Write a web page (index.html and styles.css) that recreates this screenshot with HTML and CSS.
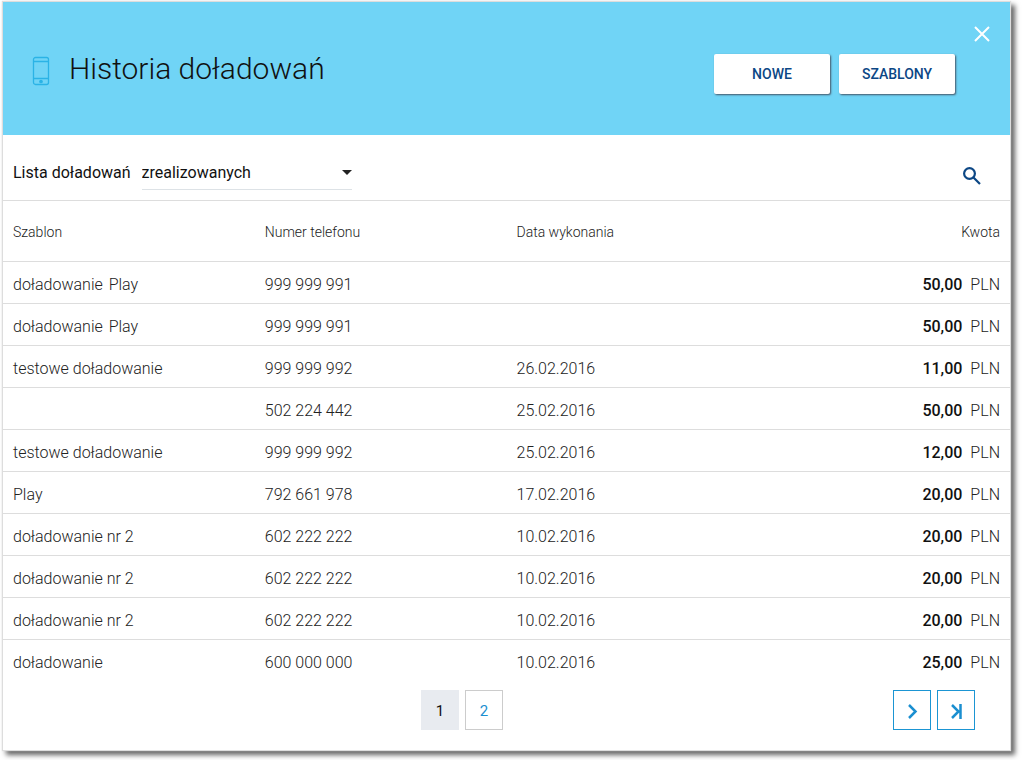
FILE: index.html
```html
<!DOCTYPE html>
<html lang="pl">
<head>
<meta charset="utf-8">
<meta name="viewport" content="width=device-width, initial-scale=1">
<title>Historia doładowań</title>
<link rel="stylesheet" href="styles.css">
</head>
<body>
<main class="panel">
  <header class="header">
    <svg class="phone-icon" viewBox="0 0 18 30" aria-hidden="true">
      <rect x="1.5" y="1.5" width="15" height="27" rx="2"/>
      <path d="M1.5 5.5h15M1.5 22.5h15"/>
      <circle cx="9" cy="25.5" r="1.2"/>
    </svg>
    <h1 class="title">Historia doładowań</h1>
    <div class="actions">
      <button class="action" type="button">NOWE</button>
      <button class="action" type="button">SZABLONY</button>
    </div>
    <button class="close" type="button" aria-label="Zamknij">
      <svg viewBox="0 0 18 18" width="18" height="18" aria-hidden="true"><path d="M2 2l14 14M16 2L2 16"/></svg>
    </button>
  </header>

  <div class="filter">
    <label class="filter-label" for="status">Lista doładowań</label>
    <div class="select-box">
      <select class="select" id="status">
        <option>zrealizowanych</option>
      </select>
      <span class="caret"></span>
    </div>
    <button class="search" type="button" aria-label="Szukaj">
      <svg viewBox="0 0 20 20" width="20" height="20" aria-hidden="true"><circle cx="7.5" cy="7.5" r="5.4"/><path d="M11.5 11.5L18 18"/></svg>
    </button>
  </div>

  <table class="history">
    <thead>
      <tr><th>Szablon</th><th>Numer telefonu</th><th>Data wykonania</th><th class="amount">Kwota</th></tr>
    </thead>
    <tbody>
      <tr><td>doładowanie <span class="operator">Play</span></td><td>999 999 991</td><td></td><td class="amount"><b>50,00</b>PLN</td></tr>
      <tr><td>doładowanie <span class="operator">Play</span></td><td>999 999 991</td><td></td><td class="amount"><b>50,00</b>PLN</td></tr>
      <tr><td>testowe doładowanie</td><td>999 999 992</td><td>26.02.2016</td><td class="amount"><b>11,00</b>PLN</td></tr>
      <tr><td></td><td>502 224 442</td><td>25.02.2016</td><td class="amount"><b>50,00</b>PLN</td></tr>
      <tr><td>testowe doładowanie</td><td>999 999 992</td><td>25.02.2016</td><td class="amount"><b>12,00</b>PLN</td></tr>
      <tr><td>Play</td><td>792 661 978</td><td>17.02.2016</td><td class="amount"><b>20,00</b>PLN</td></tr>
      <tr><td>doładowanie nr 2</td><td>602 222 222</td><td>10.02.2016</td><td class="amount"><b>20,00</b>PLN</td></tr>
      <tr><td>doładowanie nr 2</td><td>602 222 222</td><td>10.02.2016</td><td class="amount"><b>20,00</b>PLN</td></tr>
      <tr><td>doładowanie nr 2</td><td>602 222 222</td><td>10.02.2016</td><td class="amount"><b>20,00</b>PLN</td></tr>
      <tr><td>doładowanie</td><td>600 000 000</td><td>10.02.2016</td><td class="amount"><b>25,00</b>PLN</td></tr>
    </tbody>
  </table>

  <nav class="pager" aria-label="Strony">
    <div class="pages">
      <button class="page page-current" type="button" aria-current="page">1</button>
      <button class="page" type="button">2</button>
    </div>
    <div class="steps">
      <button class="page step" type="button" aria-label="Następna strona">
        <svg viewBox="0 0 16 16" width="16" height="16" aria-hidden="true"><path d="M5 2l6.500 6.500L5 15"/></svg>
      </button>
      <button class="page step" type="button" aria-label="Ostatnia strona">
        <svg viewBox="0 0 16 16" width="16" height="16" aria-hidden="true"><path d="M4 2l6.500 6.500L4 15M12.500 1v15"/></svg>
      </button>
    </div>
  </nav>
</main>
</body>
</html>
```

FILE: styles.css
```css
* {
  box-sizing: border-box;
}

body {
  margin: 0;
  padding: 2px 14px 10px 3px;
  background: #fff;
  color: #222;
  font-family: Roboto, "Liberation Sans", sans-serif;
  font-size: 16px;
  font-weight: 300;
}

button,
select {
  margin: 0;
  padding: 0;
  border: 0;
  background: none;
  font-family: inherit;
}

svg {
  display: block;
  fill: none;
}

.panel {
  background: #fff;
  box-shadow: 0 0 1px 1px #ddd, 4px 4px 5px 1px #666;
}

.header {
  position: relative;
  display: flex;
  align-items: center;
  padding: 40px 55px 40px 29px;
  background: #70d4f6;
}

.phone-icon {
  width: 18px;
  height: 30px;
  margin-top: 4px;
  stroke: #2bb3e6;
  stroke-width: 1.3;
}

.phone-icon circle {
  fill: #2bb3e6;
}

.title {
  flex: 1;
  margin: 0 0 0 19px;
  color: #111;
  font-size: 30px;
  font-weight: 300;
  line-height: 48px;
}

.actions {
  display: flex;
  gap: 9px;
  padding: 12px 0 1px;
}

.action {
  width: 116px;
  height: 40px;
  border-radius: 2px;
  background: #fff;
  box-shadow: 1px 1px 2px #456;
  color: #0c4785;
  font-size: 14px;
  font-weight: 500;
}

.close {
  position: absolute;
  top: 23px;
  right: 19px;
  stroke: #fff;
  stroke-width: 2;
}

.filter {
  display: flex;
  align-items: center;
  padding: 19px 28px 10px 10px;
  border-bottom: 1px solid #ddd;
}

.filter-label {
  font-weight: 400;
  color: #111;
}

.select-box {
  display: flex;
  align-items: center;
  width: 210px;
  height: 36px;
  margin-left: 11px;
  padding-top: 2px;
  border-bottom: 1px solid #dde2e6;
}

.select {
  flex: 1;
  height: 33px;
  appearance: none;
  color: #111;
  font-size: 16px;
  font-weight: 400;
}

.caret {
  border: 5px solid transparent;
  border-top-color: #222;
  border-bottom: 0;
}

.search {
  margin-left: auto;
  padding-top: 8px;
  stroke: #0c4785;
  stroke-width: 2.2;
}

.history {
  width: 100%;
  table-layout: fixed;
  border-collapse: collapse;
}

.history th {
  height: 60px;
  padding: 2px 10px 0;
  color: #222;
  font-size: 14px;
  font-weight: 300;
  text-align: left;
}

.history td {
  height: 42px;
  padding: 4px 10px 0;
  border-top: 1px solid #ddd;
}

.history .amount {
  text-align: right;
}

.amount b {
  margin-right: 8px;
  color: #111;
  font-weight: 500;
}

.operator {
  margin-left: 2px;
}

.pager {
  display: grid;
  grid-template-columns: 1fr auto 1fr;
  padding: 9px 35px 20px;
}

.pages,
.steps {
  display: flex;
  gap: 6px;
}

.pages {
  grid-column: 2;
  margin-right: 89px;
}

.steps {
  justify-self: end;
}

.page {
  display: flex;
  align-items: center;
  justify-content: center;
  width: 38px;
  height: 40px;
  padding-top: 2px;
  border: 1px solid #ccc;
  color: #1b8fd0;
  font-size: 15px;
  font-weight: 400;
}

.page-current {
  border-color: #e8ebf0;
  background: #e8ebf0;
  color: #111;
}

.step {
  border-color: #1b95d3;
  stroke: #1b8fd0;
  stroke-width: 2.5;
}
```
